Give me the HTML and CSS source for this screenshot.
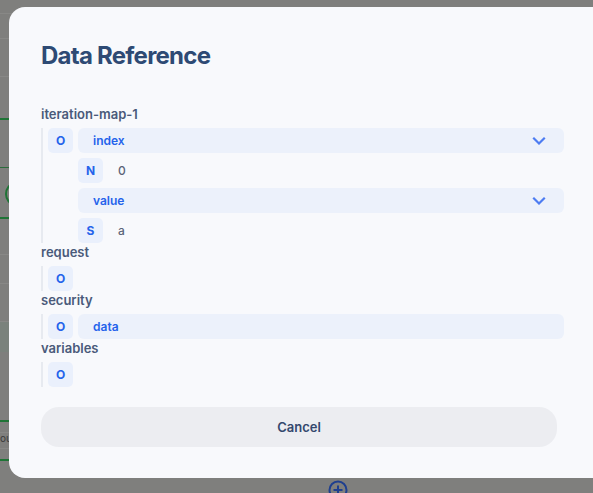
FILE: index.html
```html
<!DOCTYPE html>
<html lang="en">
<head>
<meta charset="utf-8">
<title>Data Reference</title>
<link rel="stylesheet" href="styles.css">
</head>
<body>
<div class="canvas">
  <div class="bg-line l1"></div>
  <div class="bg-line l2"></div>
  <div class="bg-line l3"></div>
  <div class="bg-line green g1"></div>
  <div class="bg-line l4"></div>
  <div class="bg-ring"></div>
  <div class="bg-line green g2"></div>
  <div class="bg-line l5"></div>
  <div class="bg-line l6"></div>
  <div class="bg-band"></div>
  <div class="bg-line green g3"></div>
  <div class="bg-line l7"></div>
  <div class="bg-text">ou</div>
  <div class="bg-line l8"></div>
  <div class="bg-line green g4"></div>
  <svg class="bg-plus" width="22" height="22" viewBox="0 0 22 22"><circle cx="11" cy="11" r="8.5" fill="none" stroke="#1f3f8f" stroke-width="2"/><path d="M11 6.5v9M6.5 11h9" stroke="#1f3f8f" stroke-width="2"/></svg>
</div>

<div class="modal">
  <h1 class="title">Data Reference</h1>

  <div class="section">
    <div class="label">iteration-map-1</div>
    <div class="tree">
      <div class="node">
        <span class="badge">O</span>
        <div class="children">
          <div class="field"><span>index</span><svg class="chev" width="20" height="20" viewBox="0 0 24 24"><path d="m6 9 6 6 6-6" fill="none" stroke="#4d7cf2" stroke-width="2.6" stroke-linecap="square"/></svg></div>
          <div class="leaf"><span class="badge">N</span><span class="val">0</span></div>
          <div class="field"><span>value</span><svg class="chev" width="20" height="20" viewBox="0 0 24 24"><path d="m6 9 6 6 6-6" fill="none" stroke="#4d7cf2" stroke-width="2.6" stroke-linecap="square"/></svg></div>
          <div class="leaf"><span class="badge">S</span><span class="val">a</span></div>
        </div>
      </div>
    </div>
  </div>

  <div class="section">
    <div class="label">request</div>
    <div class="tree">
      <div class="node"><span class="badge">O</span></div>
    </div>
  </div>

  <div class="section">
    <div class="label">security</div>
    <div class="tree">
      <div class="node">
        <span class="badge">O</span>
        <div class="children">
          <div class="field"><span>data</span></div>
        </div>
      </div>
    </div>
  </div>

  <div class="section">
    <div class="label">variables</div>
    <div class="tree">
      <div class="node"><span class="badge">O</span></div>
    </div>
  </div>

  <button class="cancel">Cancel</button>
</div>
</body>
</html>
```

FILE: styles.css
```css
html, body {
  margin: 0;
  padding: 0;
  width: 593px;
  height: 493px;
  overflow: hidden;
}
body {
  background: #7f7f7d;
  font-family: Inter, "Noto Sans", "Liberation Sans", sans-serif;
  position: relative;
}

/* background canvas under the overlay */
.canvas {
  position: absolute;
  inset: 0;
}
.bg-line {
  position: absolute;
  left: 0;
  width: 40px;
  height: 1px;
  background: #888886;
}
.bg-line.green {
  height: 2px;
  background: #1f7436;
}
.l1 { top: 13px; }
.l2 { top: 38px; }
.l3 { top: 76px; }
.g1 { top: 118px; }
.l4 { top: 167px; background: #2c6c3c; }
.g2 { top: 217px; }
.l5 { top: 254px; }
.l6 { top: 283px; }
.bg-band {
  position: absolute;
  left: 0;
  top: 321px;
  width: 40px;
  height: 30px;
  background: #7a827c;
  border-top: 1px solid #888886;
}
.g3 { top: 420px; }
.l7 { top: 432px; }
.l8 { top: 448px; }
.g4 { top: 459px; }
.bg-ring {
  position: absolute;
  left: 5px;
  top: 183px;
  width: 14px;
  height: 18px;
  border: 2px solid #1f7436;
  border-radius: 50%;
}
.bg-text {
  position: absolute;
  left: 0;
  top: 432px;
  font-size: 10px;
  color: #3a3a3a;
}
.bg-plus {
  position: absolute;
  left: 327px;
  top: 479px;
}

/* modal */
.modal {
  position: absolute;
  left: 9px;
  top: 7px;
  width: 620px;
  height: 471px;
  box-sizing: border-box;
  padding: 32px 0 0 32px;
  background: #f8f9fc;
  border-radius: 16px;
  display: flex;
  flex-direction: column;
}
.title {
  margin: 1px 0 33px;
  font-size: 24px;
  line-height: 32px;
  font-weight: 700;
  color: #2e4a74;
  letter-spacing: -0.75px;
}
.section {
  display: flex;
  flex-direction: column;
  gap: 5px;
  width: 523px;
}
.label {
  font-size: 13px;
  line-height: 18px;
  font-weight: 600;
  color: #4a5a7a;
}
.tree {
  border-left: 2px solid #e7eaf0;
  padding-left: 5px;
}
.node {
  display: flex;
  gap: 5px;
  align-items: flex-start;
}
.children {
  flex: 1;
  display: flex;
  flex-direction: column;
  gap: 5px;
}
.badge {
  flex: none;
  width: 25px;
  height: 25px;
  border-radius: 5px;
  background: #eaf0fc;
  color: #2563eb;
  font-size: 12px;
  font-weight: 700;
  display: flex;
  align-items: center;
  justify-content: center;
}
.field {
  height: 25px;
  border-radius: 6px;
  background: #ecf1fb;
  padding: 0 15px;
  display: flex;
  align-items: center;
  justify-content: space-between;
  font-size: 12px;
  font-weight: 600;
  color: #2563eb;
}
.chev {
  display: block;
}
.leaf {
  display: flex;
  align-items: center;
  gap: 15px;
}
.val {
  font-size: 12px;
  font-weight: 500;
  color: #5b6478;
}
.cancel {
  margin-top: 20px;
  width: 516px;
  height: 40px;
  border: none;
  border-radius: 18px;
  background: #ecedf1;
  font-family: inherit;
  font-size: 13px;
  font-weight: 600;
  color: #34486e;
  padding: 0;
}
```
